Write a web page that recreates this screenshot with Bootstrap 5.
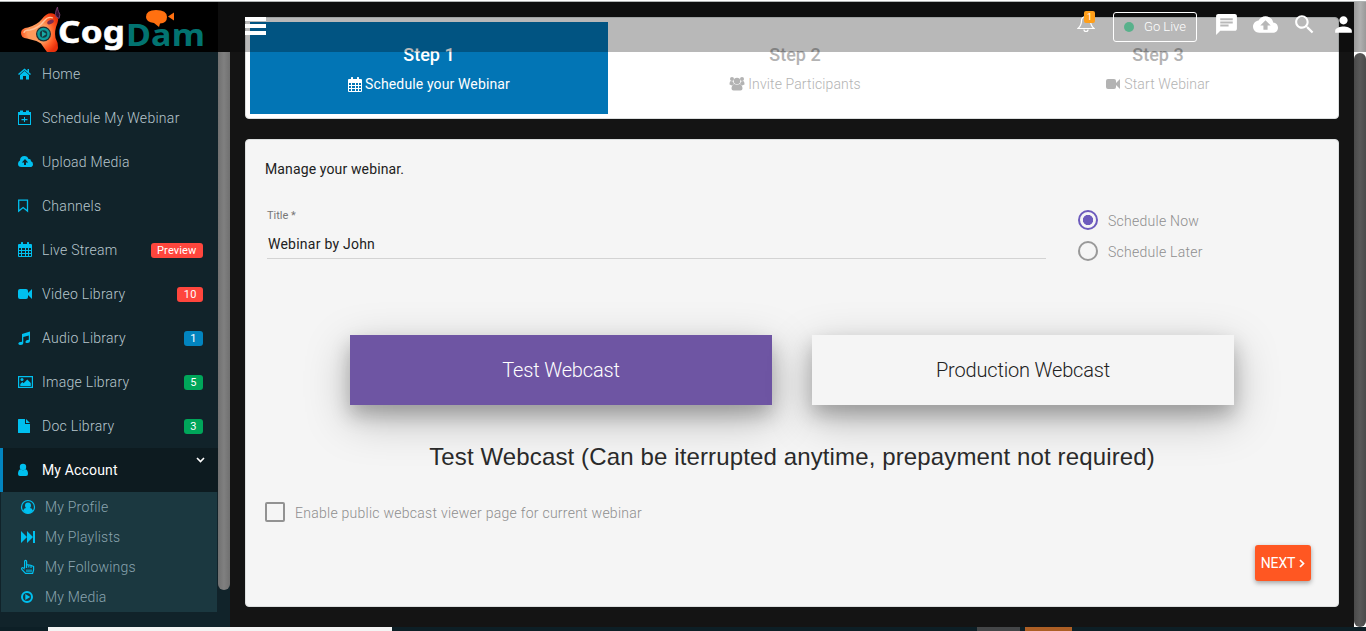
<!DOCTYPE html>
<html lang="en">
<head>
<meta charset="utf-8">
<meta name="viewport" content="width=device-width, initial-scale=1">
<title>CogDam</title>
<link href="https://cdn.jsdelivr.net/npm/bootstrap@5.3.0/dist/css/bootstrap.min.css" rel="stylesheet">
<style>
html,body{height:100%}
body{font:400 14px/20px Roboto,"Liberation Sans",sans-serif;letter-spacing:.13px;background:#141414;color:#212121;overflow:hidden}
svg{display:block;flex:none}
a{color:inherit;text-decoration:none}
.edge{height:2px;background:linear-gradient(#fff 50%,#b0b4b4 50%)}
/* sidebar */
.side{width:218px;background:#11232a;color:#b8c7ce}
.brand{height:50px;background:#000}
.brand svg{overflow:visible}
.side-link{height:44px;padding:0 15px 0 18px;letter-spacing:.28px;font-weight:300}
.side-link svg,.sub-link svg{color:#00c0ef;width:16px;height:16px}
.side-link svg{margin-right:8px}
.side-link.current{background:#0d1b20;color:#fff;border-left:3px solid #0284bf;padding-left:15px;font-weight:400;letter-spacing:.15px}
.side-link.current .chev{width:9px;height:6px;margin:0 -2px 20px 0;color:#fff}
.submenu{margin:0 1px;background:#1b3840;color:#8aa4af}
.sub-link{height:30px;padding-left:19px;letter-spacing:.2px;font-weight:300}
.sub-link svg{margin-right:9px}
.tag{border-radius:3px;font-size:11px;line-height:15px;height:15px;padding:0 6.500px;font-weight:400;letter-spacing:.15px;color:#fff}
.tag-red{background:#ff463d}.tag-blue{background:#0284bf}.tag-green{background:#00a65a}
.side-scroll{width:12px;background:#11232a;padding-bottom:37px}
.side-thumb{height:100%;border-radius:0 0 6px 6px;background:linear-gradient(90deg,#707070,#808080 50%,#707070);border-top:50px solid #131313}
.page-scroll{width:12px;background:#fff}
.scroll-top{height:50px;background:linear-gradient(90deg,#999,#b0b0b0 50%,#999)}
.page-thumb{border-radius:6px;margin-top:1px;background:linear-gradient(90deg,#4a4a4a,#585858 50%,#4a4a4a)}
/* top bar laid over the scrolled content */
.topbar{position:absolute;top:2px;left:218px;right:12px;height:50px;background:rgba(0,0,0,.28);color:#fff;padding:0 0 0 27px}
.burger{width:21px;height:18px;margin-top:-2px;border-top:4px solid #fff;border-bottom:4px solid #fff;padding:3px 0}
.burger::before{content:"";display:block;height:4px;background:#fff}
.bell{width:18px;margin:-7px 18px 0 0;position:relative}
.bell-count{position:absolute;left:7px;top:-3px;width:11px;height:12px;border-radius:2px;background:#ff9f1a;font:400 9px/12px Roboto,sans-serif;letter-spacing:0;text-align:center}
.live{width:84px;height:30px;border:1px solid #fff;border-radius:3px;font-size:13px;font-weight:300;letter-spacing:0;padding-left:10px;margin-right:17px}
.dot{width:10px;height:10px;border-radius:50%;background:#58b18b;margin-right:10px}
.tools{gap:14px;margin:-5px -2px 0 0}
/* content */
.main{padding:15px 15px 0 15px;min-width:0}
.panel{border:1px solid #dcdfdf;border-radius:4px;background:#f5f5f5}
.steps{height:102px;background:#fff;padding:4px}
.step{text-align:center;color:#b3b3b3;padding-top:23px;font-weight:300}
.step.on{background:#0275b5;color:#fff;font-weight:400;width:358px}
.step-b{width:374px}
.step h3{font-size:18px;line-height:20px;font-weight:500;margin:0 0 9px;letter-spacing:0}
.step svg{margin-right:3px}
.form-panel{height:468px;margin-top:20px;padding:19px}
.fields{margin-top:30px}
.title-box{width:779px;border-bottom:1px solid #d3d3d3;height:50px;margin-left:2px}
.title-box label{display:block;font-size:11px;line-height:14px;letter-spacing:0;color:#777}
.title-box .val{margin:11px 0 0 1px;display:block;letter-spacing:.24px}
.muted{color:#8e8e8e;font-weight:300;letter-spacing:.26px}
.modes{display:grid;row-gap:9px;margin-left:32px}
.ring{width:20px;height:20px;border:2px solid #999;border-radius:50%;margin-right:10px}
.ring.sel{border-color:#6d5bbd;background:radial-gradient(#6d5bbd 4.800px,transparent 5.400px)}
.sq{width:20px;height:20px;border:2px solid #929292;border-radius:2px;margin-right:10px}
.drop{padding-top:2px}
.choices{gap:40px;margin-top:73px}
.choice{width:422px;height:70px;font-size:20px;font-weight:300;letter-spacing:-.17px;background:#f5f5f5;box-shadow:0 14px 45px rgba(0,0,0,.25),0 10px 18px rgba(0,0,0,.22)}
.choice.on{background:#6e55a3;color:#fff}
.note{font:400 24px/30px "Liberation Sans",Arial,sans-serif;letter-spacing:.13px;margin:37px 0 0;text-align:center;color:#2a2a2a;position:relative}
.public-opt{margin-top:29px}
.next{width:56px;height:36px;border-radius:3px;background:#ff5722;color:#fff;letter-spacing:-.1px;box-shadow:0 2px 5px rgba(0,0,0,.35);margin:22px 8px 0 0}
/* strip under the window */
.task{height:4px;background:#0d1f26}
.task .a{width:344px;margin-left:48px;background:#f4f4f4}
.task .b{width:43px;margin-left:585px;background:#444648}
.task .c{width:47px;margin-left:5px;background:#ad5f25}
</style>
</head>
<body class="d-flex flex-column">
<svg width="0" height="0" class="d-none" fill="currentColor">
<symbol id="calendar" viewBox="0 0 16 16"><path fill-rule="evenodd" d="M1 2h2V.6Q3 0 3.700 0h.8Q5 0 5 .6V2h4V.6Q9 0 9.600 0h.8q.6 0 .6.6V2h2q1 0 1 1v11q0 1-1 1H1q-1 0-1-1V3q0-1 1-1zM1 6v2h2V6zm3 0v2h3V6zm4 0v2h2V6zm3 0v2h2V6zM1 9v2h2V9zm3 0v2h3V9zm4 0v2h2V9zm3 0v2h2V9zM1 12v2h2v-2zm3 0v2h3v-2zm4 0v2h2v-2zm3 0v2h2v-2z"/></symbol>
<symbol id="camera" viewBox="0 0 16 16"><rect y="3" width="10" height="10" rx="2"/><path d="M9 8l5-5v10z"/></symbol>
</svg>

<div class="edge"></div>
<div class="d-flex flex-grow-1 overflow-hidden">
  <aside class="side d-flex flex-column">
    <div class="brand">
      <svg width="218" height="50" viewBox="0 2 218 50">
        <defs><radialGradient id="g" cx=".45" cy=".5" r=".6"><stop offset=".45" stop-color="#ff9a5c"/><stop offset=".75" stop-color="#ff5a24"/><stop offset="1" stop-color="#e8310c"/></radialGradient></defs>
        <path d="M21 33Q21 28 28 27.500Q37 25 42 19Q47 12 53 13.500Q60 16 57.500 23Q54 31 55.500 38Q58 42 58 48Q57 52 54 52H47Q44 48 41 43.500Q35 40 27 38.500Q21 38 21 33z" fill="url(#g)"/>
        <path d="M24 33q0-3 6-3 9-2 14-9 4-5 9-3" fill="none" stroke="#ffc29b" stroke-width="1.300"/>
        <ellipse cx="50.500" cy="22" rx="3.500" ry="2" transform="rotate(-25 50.500 22)" fill="#7d2c4f"/>
        <path d="M57.500 7q-3 6-1.500 9.500l3 2q2-4-.5-7q-1-2-1-4.500z" fill="#35102f" stroke="#7a4170" stroke-width=".9"/>
        <circle cx="43.500" cy="34" r="7.500" fill="#222c30"/><circle cx="43.500" cy="34" r="5" fill="#153b42" stroke="#109c9b" stroke-width="2.500"/><path d="M42 31l4.500 3-4.500 3z" fill="#18a9a5"/>
        <text x="58" y="42.500" textLength="67" lengthAdjust="spacingAndGlyphs" font-family="Noto Sans" font-weight="700" font-size="30" fill="#fff" stroke="#fff" stroke-width=".5">Cog</text>
        <text x="126" y="45.500" textLength="79" lengthAdjust="spacingAndGlyphs" font-family="Noto Sans" font-weight="700" font-size="31" fill="#027370">Dam</text>
        <path d="M146 17q0-7 10-7 11 0 11 7 0 6-7 6.500l-1 3.500-5-4q-8-1-8-6zM168 16.500l6-4v8z" fill="#ff7010"/>
      </svg>
    </div>
    <nav>
      <a class="side-link d-flex align-items-center" href="#"><svg viewBox="0 0 16 16" fill="currentColor"><path d="M6.500 2.500L0 8l1 1 5.500-4.800L12 9l1-1-2-1.800V3H9.500v2zM2 9l4.500-4L11 9v4.500H8V10H5v3.500H2z"/></svg>Home</a>
      <a class="side-link d-flex align-items-center" href="#"><svg viewBox="0 0 16 16" fill="currentColor"><path fill-rule="evenodd" d="M0 2h2V.500h3V2h3V.500h3V2h2v13H0zM1 5v9h11V5zM6 7h1v2h2.500v1.200H7V12H6v-1.800H3.500V9H6z"/></svg>Schedule My Webinar</a>
      <a class="side-link d-flex align-items-center" href="#"><svg viewBox="0 0 16 16" fill="currentColor"><path fill-rule="evenodd" d="M3.500 13Q0 13 0 9.700 0 7.500 2 6.500 2 2 6.500 2q3 0 4 3 2.500-.500 2.500 2.200 2 .6 2 3Q15 13 12 13zM7 5L3.800 8.500H6V11h2V8.500h2.200z"/></svg>Upload Media</a>
      <a class="side-link d-flex align-items-center" href="#"><svg viewBox="0 0 16 16" fill="none" stroke="currentColor" stroke-width="1.300"><path d="M.7 2.200h8.800v10.900L5.100 9.500.7 13.100z"/></svg>Channels</a>
      <a class="side-link d-flex align-items-center" href="#"><svg fill="currentColor"><use href="#calendar"/></svg>Live Stream<span class="tag tag-red ms-auto">Preview</span></a>
      <a class="side-link d-flex align-items-center" href="#"><svg fill="currentColor"><use href="#camera"/></svg>Video Library<span class="tag tag-red ms-auto">10</span></a>
      <a class="side-link d-flex align-items-center" href="#"><svg viewBox="0 0 16 16" fill="currentColor"><path d="M4 4l8-2.500V11q0 2-2.500 2T7.500 11.500 10.800 9.700V5.500L5.300 7v6q0 2-2.500 2T.300 13.500 4 11.700z"/></svg>Audio Library<span class="tag tag-blue ms-auto">1</span></a>
      <a class="side-link d-flex align-items-center" href="#"><svg viewBox="0 0 16 16" fill="currentColor"><path fill-rule="evenodd" d="M0 2h15v12H0zM1.200 3.200v9.600h12.600V3.200z"/><circle cx="4" cy="5.500" r="1.500"/><path d="M2.300 12V10l2-2 1.300 1.300L9.300 5.500 12.800 9v3z"/></svg>Image Library<span class="tag tag-green ms-auto">5</span></a>
      <a class="side-link d-flex align-items-center" href="#"><svg viewBox="0 0 16 16" fill="currentColor"><path d="M0 1.500Q0 1 .7 1H7v5h5v8.400q0 .6-.6.600H.6Q0 15 0 14.400zM8 1l4 4H8z"/></svg>Doc Library<span class="tag tag-green ms-auto">3</span></a>
      <a class="side-link current d-flex align-items-center" href="#"><svg viewBox="0 0 16 16" fill="currentColor"><circle cx="5" cy="5" r="3.200"/><path d="M2.500 7.300Q5 9 7.500 7.300 10 8 10 12q0 2-2 2H2q-2 0-2-2 0-4 2.500-4.700z"/></svg>My Account<svg class="chev ms-auto" viewBox="0 0 9 6" fill="none" stroke="currentColor" stroke-width="1.600"><path d="M1 1l3.500 3.500L8 1"/></svg></a>
      <div class="submenu">
        <a class="sub-link d-flex align-items-center" href="#"><svg viewBox="0 0 16 16"><circle cx="8" cy="8" r="6.500" fill="none" stroke="currentColor" stroke-width="1.200"/><circle cx="8" cy="6.500" r="3" fill="currentColor"/><path d="M3 11.500Q4 9 6 9h4q2 0 3 2.500-2 3-5 3t-5-3z" fill="currentColor"/></svg>My Profile</a>
        <a class="sub-link d-flex align-items-center" href="#"><svg viewBox="0 0 16 16" fill="currentColor"><path d="M1 2l6 6-6 6zM7 2l6 6-6 6zM13 2h2v12h-2z"/></svg>My Playlists</a>
        <a class="sub-link d-flex align-items-center" href="#"><svg viewBox="0 0 16 16" fill="none" stroke="currentColor" stroke-width="1.200"><path d="M4.600 9V2.500q0-1.200 1-1.200t1 1.200V6q4-.3 7 1.500v3.500l-1 3.300H5.500L1.800 10.300Q1.200 9 2.500 8.500q1 0 2.100 1.800M6.600 6v3M8.800 6v2.500M11 6.500V9M7 10.500V13M9 10.500V13M11 10.500V13"/></svg>My Followings</a>
        <a class="sub-link d-flex align-items-center" href="#"><svg viewBox="0 0 16 16"><circle cx="7" cy="8" r="5" fill="none" stroke="currentColor" stroke-width="2"/><path d="M5.300 5l5 3-5 3z" fill="currentColor"/></svg>My Media</a>
      </div>
    </nav>
  </aside>
  <div class="side-scroll"><div class="side-thumb"></div></div>

  <main class="main flex-grow-1">
    <section class="panel steps d-flex">
      <div class="step on flex-shrink-0"><h3>Step 1</h3><div class="d-flex justify-content-center align-items-center"><svg width="14" height="15" viewBox="0 0 14 15" fill="currentColor"><use href="#calendar" width="16" height="16"/></svg>Schedule your Webinar</div></div>
      <div class="step step-b flex-shrink-0"><h3>Step 2</h3><div class="d-flex justify-content-center align-items-center"><svg width="16" height="16" viewBox="0 0 16 16" fill="currentColor"><circle cx="3" cy="3" r="2"/><circle cx="13" cy="3" r="2"/><circle cx="8" cy="5" r="3.200"/><path d="M.5 8.500Q.500 5 2 5L4 5.500 5 8 3 9.500zM15.500 8.500q0-3.500-1.500-3.500l-2 .5L11 8l2 1.500zM5.500 8Q8 9.500 10.500 8 13.500 9 13.500 12.500q0 2-2 2h-7q-2 0-2-2Q2.500 9 5.500 8z"/></svg>Invite Participants</div></div>
      <div class="step flex-grow-1"><h3>Step 3</h3><div class="d-flex justify-content-center align-items-center"><svg width="15" height="16" viewBox="0 0 15 16" fill="currentColor"><use href="#camera" width="16" height="16"/></svg>Start Webinar</div></div>
    </section>
    <section class="panel form-panel">
      <div>Manage your webinar.</div>
      <div class="fields d-flex">
        <div class="title-box"><label>Title *</label><span class="val">Webinar by John</span></div>
        <div class="muted modes">
          <div class="d-flex align-items-center"><span class="ring sel"></span><span class="drop">Schedule Now</span></div>
          <div class="d-flex align-items-center"><span class="ring"></span><span class="drop">Schedule Later</span></div>
        </div>
      </div>
      <div class="choices d-flex justify-content-center">
        <div class="choice on d-flex align-items-center justify-content-center">Test Webcast</div>
        <div class="choice d-flex align-items-center justify-content-center">Production Webcast</div>
      </div>
      <h2 class="note">Test Webcast (Can be iterrupted anytime, prepayment not required)</h2>
      <div class="muted public-opt d-flex align-items-center"><span class="sq"></span><span class="drop">Enable public webcast viewer page for current webinar</span></div>
      <div class="next d-flex align-items-center justify-content-center ms-auto">NEXT<svg class="ms-1" width="6" height="9" viewBox="0 0 6 9" fill="none" stroke="currentColor" stroke-width="1.700"><path d="M1 1l3.500 3.500L1 8"/></svg></div>
    </section>
  </main>

  <div class="page-scroll d-flex flex-column"><div class="scroll-top"></div><div class="page-thumb flex-grow-1"></div></div>
</div>

<header class="topbar d-flex align-items-center">
  <div class="burger"></div>
  <div class="d-flex align-items-center ms-auto">
    <div class="bell"><svg width="18" height="19" viewBox="0 0 18 19" fill="none" stroke="#fff" stroke-width="1.200"><path d="M9 .500v2M1 14.500Q4.500 11.500 4.500 7 4.500 2.500 9 2.500T13.500 7q0 4.500 3.500 7.500zM7 15.500q0 2 2 2t2-2"/></svg><span class="bell-count">1</span></div>
    <div class="live d-flex align-items-center"><span class="dot"></span>Go Live</div>
    <div class="tools d-flex">
      <svg width="25" height="25" viewBox="0 0 24 24" fill="#fff"><path d="M20 2H4c-1.100 0-1.990.9-1.990 2L2 22l4-4h14c1.100 0 2-.9 2-2V4c0-1.100-.9-2-2-2zM6 9h12v2H6V9zm8 5H6v-2h8v2zm4-6H6V6h12v2z"/></svg>
      <svg width="25" height="25" viewBox="0 0 24 24" fill="#fff"><path d="M19.350 10.040C18.670 6.590 15.640 4 12 4 9.110 4 6.600 5.640 5.350 8.040 2.340 8.360 0 10.910 0 14c0 3.310 2.690 6 6 6h13c2.760 0 5-2.240 5-5 0-2.640-2.050-4.780-4.650-4.960zM14 13v4h-4v-4H7l5-5 5 5h-3z"/></svg>
      <svg width="25" height="25" viewBox="0 0 24 24" fill="#fff"><path d="M15.500 14h-.79l-.28-.27C15.410 12.590 16 11.110 16 9.500 16 5.910 13.090 3 9.500 3S3 5.910 3 9.500 5.910 16 9.500 16c1.610 0 3.090-.59 4.230-1.570l.27.28v.79l5 4.990L20.490 19l-4.990-5zm-6 0C7.010 14 5 11.990 5 9.500S7.010 5 9.500 5 14 7.010 14 9.500 11.990 14 9.500 14z"/></svg>
      <svg width="25" height="25" viewBox="0 0 24 24" fill="#fff"><path d="M12 12c2.210 0 4-1.790 4-4s-1.790-4-4-4-4 1.790-4 4 1.790 4 4 4zm0 2c-2.670 0-8 1.340-8 4v2h16v-2c0-2.660-5.330-4-8-4z"/></svg>
    </div>
  </div>
</header>
<div class="task d-flex"><div class="a"></div><div class="b"></div><div class="c"></div></div>
<script src="https://cdn.jsdelivr.net/npm/bootstrap@5.3.0/dist/js/bootstrap.bundle.min.js"></script>
</body>
</html>
